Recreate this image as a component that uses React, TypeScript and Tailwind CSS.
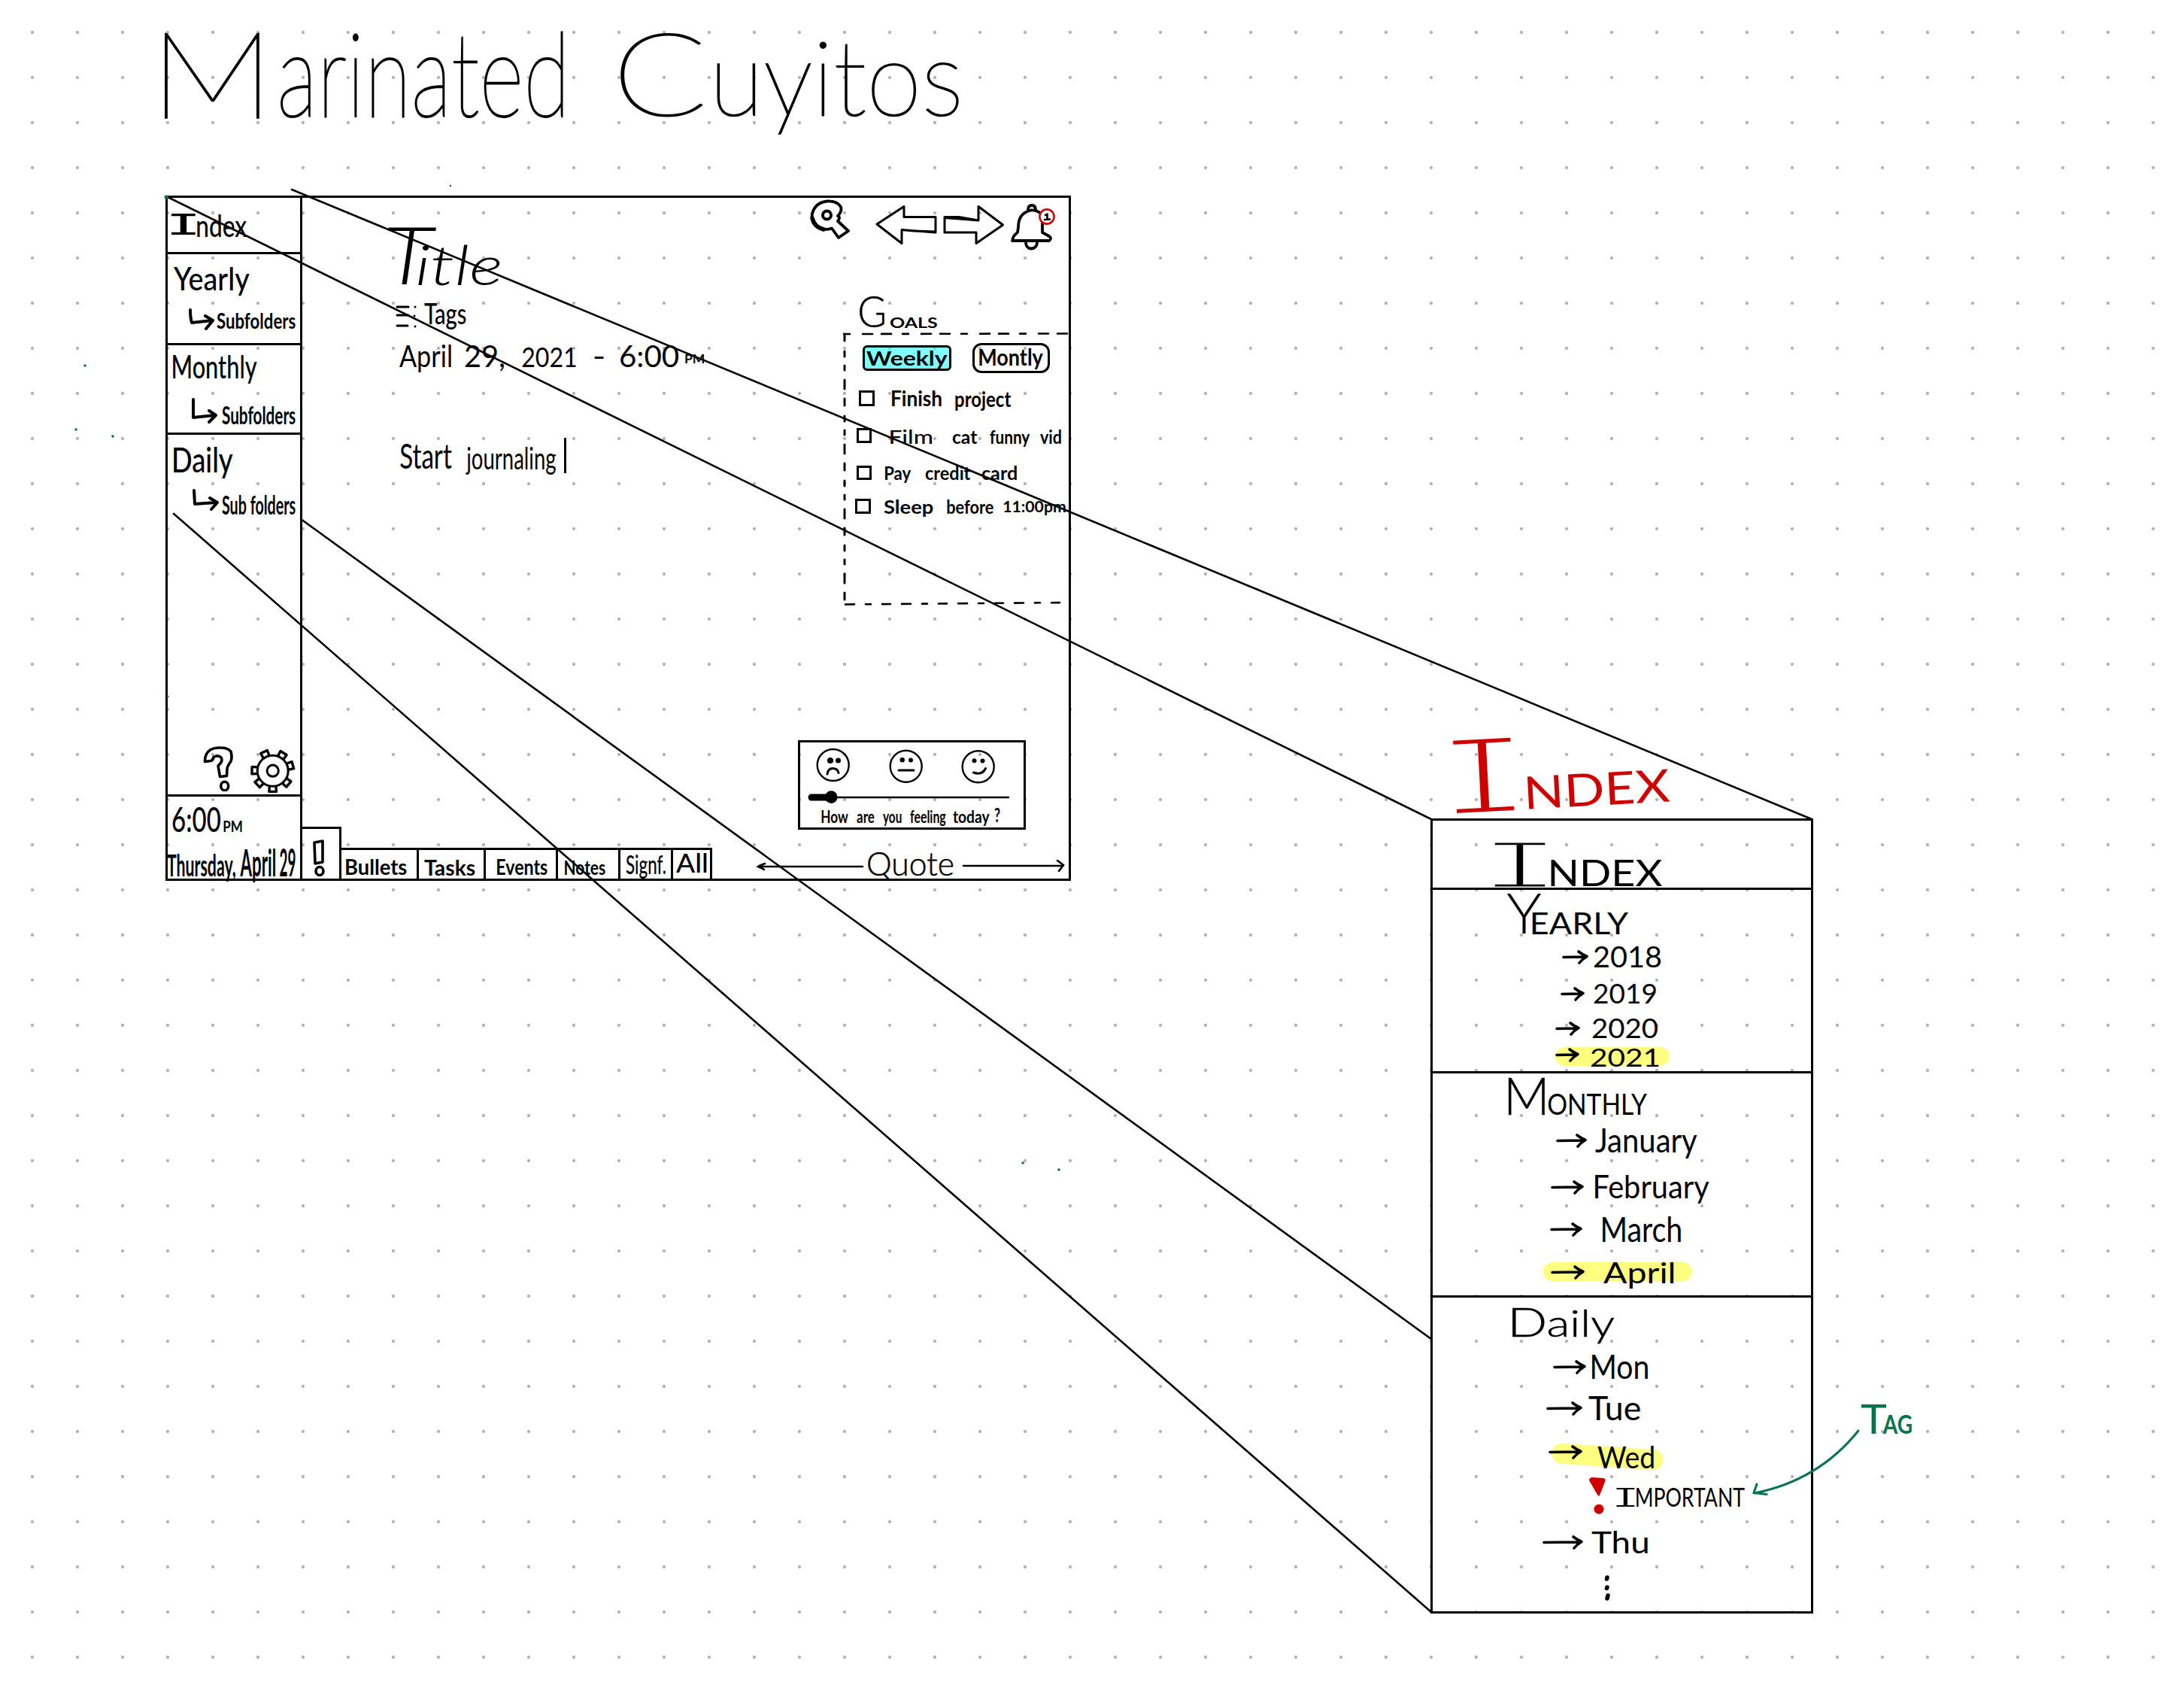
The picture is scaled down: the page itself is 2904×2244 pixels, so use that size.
import { useLayoutEffect, useRef } from "react";
import type { ReactNode } from "react";

/**
 * A word that fills its box: the ink spans the box's width, and the box's
 * height is the height of a capital, so the baseline is the bottom edge.
 */
function Ink({ children, className = "" }: { children: string; className?: string }) {
  const box = useRef<HTMLSpanElement>(null);
  const word = useRef<HTMLSpanElement>(null);
  useLayoutEffect(() => {
    const b = box.current;
    const w = word.current;
    const ctx = document.createElement("canvas").getContext("2d");
    if (!b || !w || !ctx) return;
    const cs = getComputedStyle(w);
    ctx.font = `${cs.fontStyle} ${cs.fontWeight} ${cs.fontSize} ${cs.fontFamily}`;
    const m = ctx.measureText(children);
    const cap = ctx.measureText("H").actualBoundingBoxAscent;
    const size = parseFloat(cs.fontSize);
    const up = m.fontBoundingBoxAscent;
    const down = m.fontBoundingBoxDescent;
    const base = (size - up - down) / 2 + up;
    let left = m.actualBoundingBoxLeft;
    let ink = m.actualBoundingBoxLeft + m.actualBoundingBoxRight;
    if (cs.fontFeatureSettings !== "normal") {
      const side = size * 0.045;
      left = -side;
      ink = w.offsetWidth - 2 * side;
    }
    const sx = b.clientWidth / ink;
    const sy = b.clientHeight / cap;
    w.style.transform = `matrix(${sx},0,0,${sy},${left * sx},${b.clientHeight - base * sy})`;
  }, [children]);
  return (
    <span ref={box} className={`block shrink-0 ${className}`}>
      <span ref={word} className="block w-max origin-top-left whitespace-pre leading-none">
        {children}
      </span>
    </span>
  );
}

function Arrow({ w, className = "" }: { w: number; className?: string }) {
  return (
    <svg width={w} height={22} viewBox={`0 0 ${w} 22`} className={`relative block shrink-0 overflow-visible ${className}`} fill="none" stroke="#000" strokeWidth={3.6} strokeLinecap="round" strokeLinejoin="round">
      <path d={`M2 11.5 L${w - 4} 11 M${w - 13} 4 Q${w - 8} 8 ${w - 2} 10.5 Q${w - 8} 14 ${w - 12} 19`} />
    </svg>
  );
}

function Elbow({ d, className = "" }: { d: string; className?: string }) {
  return (
    <svg width={36} height={34} viewBox="0 0 36 34" className={`block shrink-0 overflow-visible ${className}`} fill="none" stroke="#000" strokeWidth={4} strokeLinecap="round" strokeLinejoin="round">
      <path d={d} />
    </svg>
  );
}

function Goal({ className, box, children }: { className: string; box: string; children: ReactNode }) {
  return (
    <div className={`flex items-end ${className}`}>
      <span className={`block shrink-0 border-[3px] border-black ${box}`} />
      {children}
    </div>
  );
}

function Sidebar() {
  return (
    <aside className="flex w-[179px] shrink-0 flex-col border-r-[3px] border-black text-[36px] font-medium">
      <div className="flex h-[75px] shrink-0 border-b-[3px] border-black pl-[5px] pt-[21px]">
        <Ink className="h-[28px] w-[32px] font-[Inter] font-normal [font-feature-settings:'cv08']">I</Ink>
        <Ink className="ml-[2px] mt-[2px] h-[29px] w-[66px]">ndex</Ink>
      </div>
      <div className="h-[121px] shrink-0 border-b-[3px] border-black pt-[18px]">
        <Ink className="ml-[7px] h-[30px] w-[102px]">Yearly</Ink>
        <div className="mt-[24px] flex">
          <Elbow className="ml-[28px]" d="M2 2 Q2 12 4 19 L31 16 M22 10 L32 16 L23 27" />
          <Ink className="ml-[1px] mt-[5px] h-[22px] w-[105px] text-[28px] font-bold">Subfolders</Ink>
        </div>
      </div>
      <div className="h-[119px] shrink-0 border-b-[3px] border-black pt-[13px]">
        <Ink className="ml-[7px] h-[31px] w-[112px]">Monthly</Ink>
        <div className="mt-[26px] flex">
          <Elbow className="ml-[32px]" d="M2 2 L2 26 L31 23 M23 17 L32 23 L23 32" />
          <Ink className="ml-[4px] mt-[11px] h-[24px] w-[98px] text-[28px] font-bold">Subfolders</Ink>
        </div>
      </div>
      <div className="flex-1 pt-[16px]">
        <Ink className="ml-[8px] h-[34px] w-[79px]">Daily</Ink>
        <div className="mt-[22px] flex">
          <Elbow className="ml-[33px]" d="M2 2 L3 20 L31 18 M23 12 L33 18 L25 27" />
          <Ink className="ml-[3px] mt-[8px] h-[26px] w-[98px] text-[28px] font-bold">Sub folders</Ink>
        </div>
      </div>
      <div className="flex h-[73px] shrink-0 border-b-[3px] border-black pl-[44px]">
        <svg width={48} height={64} viewBox="267 988 48 64" className="mt-[2px] block" fill="none" stroke="#000" strokeWidth={3.6} strokeLinejoin="round">
          <path d="M272.500 1012.500 Q272 1002 280 996.500 Q286 993.500 293 994 Q303 994 307 999 Q309 1007 307 1012 Q302 1019 302 1022 L301.500 1031.500 L292.500 1032.500 L290 1018 Q297 1012 294 1007 Q290 1003 284 1006.500 Q283 1011 280 1011.500 Z" />
          <ellipse cx={298.700} cy={1045} rx={5} ry={5.700} />
        </svg>
        <svg width={62} height={62} viewBox="331 994 62 62" className="ml-[16px] mt-[8px] block" fill="none" stroke="#000" strokeWidth={3}>
          <circle cx={362.7} cy={1024.7} r={20.5} />
          <circle cx={362.7} cy={1024.7} r={7.6} />
          {[-25, 31, 74, 130, 180, 228, 271].map((a) => (
            <path key={a} transform={`rotate(${a} 362.7 1024.7)`} d="M358.5 1005 L358 997 L367.5 997 L367 1005" strokeWidth={3.4} strokeLinejoin="round" />
          ))}
        </svg>
      </div>
      <div className="h-[109px] shrink-0 pl-[6px] pt-[14px]">
        <div className="flex items-end">
          <Ink className="h-[33px] w-[64px]">6:00</Ink>
          <Ink className="ml-[4px] h-[15px] w-[25px] text-[20px] font-bold">PM</Ink>
        </div>
        <div className="-ml-[7px] mt-[22px] flex items-end">
          <Ink className="h-[29px] w-[91px] font-bold">Thursday,</Ink>
          <Ink className="ml-[6px] h-[36px] w-[47px] font-bold">April</Ink>
          <Ink className="ml-[6px] h-[37px] w-[21px] font-bold">29</Ink>
        </div>
      </div>
    </aside>
  );
}

function Editor() {
  return (
    <section className="flex-1 pt-[39px]">
      <div className="ml-[113px] flex items-end text-[72px] font-light italic">
        <Ink className="h-[77px] w-[66px] text-[104px]">T</Ink>
        <Ink className="-ml-[25px] h-[51px] w-[109px]">itle</Ink>
      </div>
      <div className="ml-[124px] mt-[24px] flex text-[38px]">
        <svg width={30} height={34} viewBox="0 0 30 34" className="mt-[1px] block" stroke="#000" strokeWidth={3} strokeLinecap="round">
          <path d="M2 4 L17 4 M2 15 L17 15 M2 29 L16 29 M26 4 L26 4.1 M25 16 L25 16.1 M26 30 L26 30.1" />
        </svg>
        <Ink className="ml-[8px] h-[28px] w-[56px] font-medium">Tags</Ink>
      </div>
      <div className="ml-[129px] mt-[20px] flex items-end text-[40px]">
        <Ink className="h-[30px] w-[69px]">April</Ink>
        <Ink className="ml-[18px] h-[29px] w-[52px]">29,</Ink>
        <Ink className="ml-[24px] h-[27px] w-[72px]">2021</Ink>
        <Ink className="ml-[24px] h-[29px] w-[13px]">-</Ink>
        <Ink className="ml-[22px] h-[29px] w-[77px]">6:00</Ink>
        <Ink className="mb-[4px] ml-[9px] h-[12px] w-[25px] text-[16px] font-bold">PM</Ink>
      </div>
      <div className="ml-[130px] mt-[94px] flex items-end text-[44px]">
        <Ink className="mb-[6px] h-[34px] w-[69px]">Start</Ink>
        <Ink className="mb-[5px] ml-[18px] h-[30px] w-[120px]">journaling</Ink>
        <span className="ml-[11px] block h-[47px] w-[3px] bg-black" />
      </div>
    </section>
  );
}

function Tabs() {
  return (
    <nav className="flex items-end text-[28px] font-medium">
      <div className="flex h-[69px] w-[52px] items-end justify-center border-r-[3px] border-t-[3px] border-black pb-[2px] pr-[4px]">
        <svg width={22} height={50} viewBox="413 1117 22 50" className="block" fill="none" stroke="#000" strokeWidth={3.6} strokeLinejoin="round">
          <path d="M417 1121 L428 1119 L428 1147 L418 1149 Z" />
          <ellipse cx={424} cy={1159} rx={5} ry={5.5} />
        </svg>
      </div>
      <div className="flex h-[41px] w-[103px] items-end border-r-[3px] border-t-[3px] border-black pb-[5px] pl-[6px]">
        <Ink className="h-[21px] w-[81px] font-bold">Bullets</Ink>
      </div>
      <div className="flex h-[41px] w-[89px] items-end border-r-[3px] border-t-[3px] border-black pb-[4px] pl-[7px]">
        <Ink className="h-[22px] w-[68px] font-bold">Tasks</Ink>
      </div>
      <div className="flex h-[41px] w-[96px] items-end border-r-[3px] border-t-[3px] border-black pb-[5px] pl-[15px]">
        <Ink className="h-[22px] w-[67px] font-bold">Events</Ink>
      </div>
      <div className="flex h-[41px] w-[83px] items-end border-r-[3px] border-t-[3px] border-black pb-[5px] pl-[9px]">
        <Ink className="h-[20px] w-[54px] font-bold">Notes</Ink>
      </div>
      <div className="flex h-[41px] w-[70px] items-end border-r-[3px] border-t-[3px] border-black pb-[5px] pl-[7px]">
        <Ink className="h-[26px] w-[53px] text-[32px]">Signf.</Ink>
      </div>
      <div className="flex h-[41px] w-[52px] items-end border-r-[3px] border-t-[3px] border-black pb-[7px] pl-[4px]">
        <Ink className="h-[26px] w-[41px] text-[32px]">All</Ink>
      </div>
    </nav>
  );
}

function Toolbar() {
  return (
    <div className="flex h-[70px] shrink-0 pl-[76px]">
      <svg width={54} height={54} viewBox="1076 265 54 54" className="mt-[2px] block shrink-0" fill="none" stroke="#000" strokeLinejoin="round" strokeLinecap="round">
        <path strokeWidth={3.8} d="M1114 287 Q1120 281 1118 275 Q1113 267 1100 267.500 Q1084 269 1080 284 Q1078 296 1087 302 Q1096 307 1106 303.500 L1115 316 L1128 307 L1114 294 Q1118 289 1114 287 Z" />
        <path strokeWidth={5.5} d="M1080 290 Q1083 302 1095 305" />
        <circle cx={1099.5} cy={286} r={5.5} strokeWidth={4} />
      </svg>
      <svg width={84} height={54} viewBox="1164 272 84 54" className="ml-[34px] mt-[9px] block shrink-0" fill="none" stroke="#000" strokeWidth={3} strokeLinejoin="round">
        <path d="M1166 298 L1202 274.5 L1202 288.5 L1244 288.5 L1244 309 L1199 305.5 L1199 323.5 Z M1199 305.5 L1215 307 L1244 308" />
      </svg>
      <svg width={84} height={54} viewBox="1253 272 84 54" className="ml-[5px] mt-[9px] block shrink-0" fill="none" stroke="#000" strokeWidth={3} strokeLinejoin="round">
        <path d="M1256 288.5 L1275 288.5 L1301 293 L1301 274.5 L1333.5 299 L1298 323.5 L1298 309 L1256 309 Z M1256 289.5 L1301 293" />
      </svg>
      <svg width={66} height={68} viewBox="1340 266 66 68" className="ml-[3px] mt-[3px] block shrink-0" fill="none" stroke="#000" strokeWidth={3.8} strokeLinejoin="round" strokeLinecap="round">
        <path d="M1384 284 Q1378 279 1371 279.5 Q1354 283 1354 302 L1353 309 Q1347 313 1346 320 L1395 320 Q1399 317 1395 314 L1386 309 L1386 297" />
        <path d="M1367 279 Q1367 273 1372 273 Q1377 273 1377 279" />
        <path d="M1364 322 Q1364 330 1371 330.500 Q1379 330 1379 322" />
        <circle cx={1392} cy={288} r={9.6} stroke="#c80a0a" strokeWidth={2.6} fill="#fff" />
        <path d="M1390 286 L1392.500 284.500 L1392.500 291.500 M1389 292 L1396 291.500" strokeWidth={2.6} />
      </svg>
    </div>
  );
}

function Goals() {
  return (
    <section className="shrink-0">
      <div className="ml-[143px] mt-[63px] flex items-end">
        <Ink className="h-[40px] w-[33px] text-[56px] font-light [-webkit-text-stroke:0.5px]">G</Ink>
        <Ink className="ml-[7px] h-[14px] w-[64px] text-[18px] font-bold">OALS</Ink>
      </div>
      <div className="ml-[122px] mt-[6px] h-[362px] pt-[14px]">
        <div className="flex items-center">
          <div className="ml-[25px] flex h-[34px] w-[118px] justify-center rounded-[6px] border-[3px] border-black bg-[#00ffff]/50 pt-[5px]">
            <Ink className="h-[19px] w-[108px] text-[26px] font-bold">Weekly</Ink>
          </div>
          <div className="ml-[28px] flex h-[40px] w-[103px] justify-center rounded-[12px] border-[3px] border-black pt-[4px]">
            <Ink className="h-[23px] w-[85px] text-[30px] font-bold">Montly</Ink>
          </div>
        </div>
        <div className="text-[25px] font-bold">
          <Goal className="ml-[20px] mt-[23px]" box="h-[21px] w-[21px]">
            <Ink className="-mb-[1px] ml-[23px] h-[20px] w-[66px]">Finish</Ink>
            <Ink className="-mb-[2px] ml-[18px] h-[20px] w-[75px]">project</Ink>
          </Goal>
          <Goal className="ml-[17px] mt-[29px]" box="h-[20px] w-[20px]">
            <Ink className="-mb-[1px] ml-[25px] h-[18px] w-[56px] font-medium">Film</Ink>
            <Ink className="-mb-[1px] ml-[26px] h-[18px] w-[34px]">cat</Ink>
            <Ink className="-mb-[1px] ml-[16px] h-[18px] w-[54px]">funny</Ink>
            <Ink className="-mb-[1px] ml-[13px] h-[18px] w-[28px]">vid</Ink>
          </Goal>
          <Goal className="ml-[17px] mt-[30px]" box="h-[19px] w-[20px]">
            <Ink className="ml-[18px] h-[18px] w-[35px]">Pay</Ink>
            <Ink className="ml-[18px] h-[18px] w-[61px]">credit</Ink>
            <Ink className="ml-[14px] h-[18px] w-[47px]">card</Ink>
          </Goal>
          <Goal className="ml-[15px] mt-[25px]" box="h-[20px] w-[21px]">
            <Ink className="ml-[17px] h-[18px] w-[66px]">Sleep</Ink>
            <Ink className="ml-[18px] h-[18px] w-[62px]">before</Ink>
            <Ink className="mb-[2px] ml-[13px] h-[15px] w-[83px]">11:00pm</Ink>
          </Goal>
        </div>
      </div>
    </section>
  );
}

function Mood() {
  return (
    <section className="ml-[61px] mt-[180px] h-[119px] w-[303px] shrink-0 border-[3px] border-black">
      <svg width={297} height={84} viewBox="1064 986 297 84" className="block" fill="none" stroke="#000" strokeWidth={2.4} strokeLinecap="round">
        <circle cx={1107.7} cy={1016} r={21} />
        <circle cx={1204.7} cy={1017.700} r={21} />
        <circle cx={1300.700} cy={1018.300} r={21} />
        <g fill="#000" stroke="none">
          <circle cx={1104} cy={1010} r={4} />
          <circle cx={1114.500} cy={1010} r={3.500} />
          <circle cx={1199.700} cy={1009.300} r={3.200} />
          <circle cx={1211} cy={1009.500} r={3} />
          <circle cx={1295.500} cy={1010.300} r={3} />
          <circle cx={1306.500} cy={1010.500} r={3} />
        </g>
        <path d="M1100 1028 Q1101 1020 1108 1020.500 Q1114 1021 1115 1026.500 M1195 1023 L1215 1023 M1294.500 1026 Q1306 1030 1310.500 1020.500" strokeWidth={3} />
        <path d="M1110 1059 L1341 1059" />
        <path d="M1079 1059 L1100 1059" strokeWidth={9} />
        <circle cx={1105.300} cy={1058.600} r={8.300} fill="#000" stroke="none" />
      </svg>
      <div className="ml-[28px] mt-[3px] flex items-end text-[22px] font-bold">
        <Ink className="h-[17px] w-[36px]">How</Ink>
        <Ink className="ml-[11px] h-[17px] w-[24px]">are</Ink>
        <Ink className="ml-[11px] h-[17px] w-[25px]">you</Ink>
        <Ink className="ml-[11px] h-[17px] w-[48px]">feeling</Ink>
        <Ink className="ml-[9px] h-[17px] w-[49px]">today</Ink>
        <Ink className="ml-[6px] h-[20px] w-[8px]">?</Ink>
      </div>
    </section>
  );
}

function Quote() {
  return (
    <div className="ml-[5px] mt-[31px] flex shrink-0">
      <svg width={145} height={20} viewBox="1005 1142 145 20" className="mt-[8px] block shrink-0" fill="none" stroke="#000" strokeWidth={2.6} strokeLinecap="round">
        <path d="M1008 1152 L1147 1152 M1017 1148 Q1011 1150 1008 1152 Q1013 1154 1016 1156" />
      </svg>
      <Ink className="ml-[4px] h-[30px] w-[113px] text-[42px] font-light [-webkit-text-stroke:0.5px]">Quote</Ink>
      <svg width={140} height={20} viewBox="1279 1141 140 20" className="ml-[12px] mt-[7px] block shrink-0" fill="none" stroke="#000" strokeWidth={2.6} strokeLinecap="round">
        <path d="M1281 1151 L1412 1151 M1406 1144 L1414 1150 L1408 1158" />
      </svg>
    </div>
  );
}

function IndexPanel() {
  return (
    <div className="h-[1057px] w-[509px] border-[3px] border-black">
      <div className="flex h-[92px] items-end border-b-[3px] border-black pb-[2px] pl-[81px]">
        <Ink className="h-[57px] w-[70px] font-[Inter] text-[80px] font-thin [-webkit-text-stroke:1px] [font-feature-settings:'cv08']">I</Ink>
        <Ink className="ml-[6px] h-[35px] w-[148px] text-[50px]">NDEX</Ink>
      </div>
      <div className="h-[244px] border-b-[3px] border-black pt-[5px] text-[38px]">
        <div className="ml-[98px] flex items-end">
          <Ink className="h-[54px] w-[47px] text-[74px] font-light">Y</Ink>
          <Ink className="-ml-[13px] h-[30px] w-[129px] text-[42px]">EARLY</Ink>
        </div>
        <div className="ml-[172px] mt-[15px] flex items-center">
          <Arrow w={35} />
          <Ink className="ml-[7px] h-[29px] w-[90px]">2018</Ink>
        </div>
        <div className="ml-[170px] mt-[21px] flex items-center">
          <Arrow w={32} />
          <Ink className="ml-[12px] h-[27px] w-[83px]">2019</Ink>
        </div>
        <div className="ml-[163px] mt-[19px] flex items-center">
          <Arrow w={33} />
          <Ink className="ml-[16px] h-[27px] w-[87px]">2020</Ink>
        </div>
        <div className="ml-[163px] mt-[12px] flex h-[25px] w-[152px] rounded-full bg-[#ffff00]/50">
          <Arrow w={32} className="-mt-[1px]" />
          <Ink className="ml-[15px] mt-[2px] h-[24px] w-[91px]">2021</Ink>
        </div>
      </div>
      <div className="h-[298px] border-b-[3px] border-black pt-[6px] text-[44px]">
        <div className="ml-[101px] flex items-end">
          <Ink className="h-[49px] w-[48px] text-[68px] font-light [-webkit-text-stroke:0.5px]">M</Ink>
          <Ink className="ml-[4px] h-[28px] w-[132px] text-[40px]">ONTHLY</Ink>
        </div>
        <div className="ml-[164px] mt-[17px] flex items-center">
          <Arrow w={41} />
          <Ink className="ml-[11px] h-[33px] w-[136px]">January</Ink>
        </div>
        <div className="ml-[157px] mt-[30px] flex items-center">
          <Arrow w={44} />
          <Ink className="ml-[15px] h-[31px] w-[152px]">February</Ink>
        </div>
        <div className="ml-[156px] mt-[24px] flex items-center">
          <Arrow w={43} />
          <Ink className="ml-[27px] h-[34px] w-[104px]">March</Ink>
        </div>
        <div className="ml-[147px] mt-[27px] flex h-[25px] w-[198px] rounded-full bg-[#ffff00]/50 pl-[10px]">
          <Arrow w={45} className="mt-[2px]" />
          <Ink className="ml-[25px] h-[28px] w-[94px]">April</Ink>
        </div>
      </div>
      <div className="pt-[15px] text-[44px]">
        <div className="ml-[106px] flex items-end">
          <Ink className="h-[37px] w-[43px] text-[52px] font-light [-webkit-text-stroke:0.5px]">D</Ink>
          <Ink className="ml-[4px] h-[34px] w-[89px] font-light [-webkit-text-stroke:0.5px]">aily</Ink>
        </div>
        <div className="ml-[160px] mt-[23px] flex items-center">
          <Arrow w={44} />
          <Ink className="ml-[8px] h-[33px] w-[74px]">Mon</Ink>
        </div>
        <div className="ml-[151px] mt-[22px] flex items-center">
          <Arrow w={48} />
          <Ink className="ml-[8px] h-[33px] w-[69px]">Tue</Ink>
        </div>
        <div className="relative mt-[34px] flex pl-[154px]">
          <span className="absolute left-[159px] top-[1px] block h-[27px] w-[147px] rotate-[4deg] rounded-[12px] bg-[#ffff00]/50" />
          <Arrow w={45} className="-mt-[3px]" />
          <Ink className="ml-[20px] h-[30px] w-[75px]">Wed</Ink>
        </div>
        <div className="ml-[206px] mt-[11px] flex">
          <svg width={30} height={50} viewBox="2111 1963 30 50" className="block shrink-0" fill="#cf0000">
            <path d="M2113 1968 Q2113 1964 2118 1964 L2132 1965 Q2136 1966 2134 1970 L2127 1988 Q2125 1990 2124 1987 Z" />
            <circle cx={2126} cy={2006.200} r={6.500} />
          </svg>
          <div className="ml-[8px] mt-[15px] flex text-[34px]">
            <Ink className="h-[25px] w-[24px] font-[Inter] font-light [font-feature-settings:'cv08']">I</Ink>
            <Ink className="ml-[3px] h-[25px] w-[144px]">MPORTANT</Ink>
          </div>
        </div>
        <div className="ml-[146px] mt-[22px] flex items-center">
          <Arrow w={54} />
          <Ink className="ml-[11px] h-[30px] w-[75px]">Thu</Ink>
        </div>
        <svg width={10} height={40} viewBox="2132 2092 10 40" className="ml-[227px] mt-[27px] block" stroke="#000" strokeWidth={5.500} strokeLinecap="round">
          <path d="M2137 2097 L2136.500 2099 M2137 2110 L2136.500 2111.500 M2138 2121 L2137 2125" />
        </svg>
      </div>
    </div>
  );
}

function Overlay() {
  return (
    <svg width={2904} height={2244} viewBox="0 0 2904 2244" className="pointer-events-none absolute left-0 top-0 block" fill="none" stroke="#000" strokeWidth={2.6} strokeLinecap="round">
      <path d="M221 261 L1903 1089 M388 252 L2409 1089 M231 683 L1903 2143 M400 690 L1903 1780" />
      <path d="M1122 444 L1420 443.500" strokeDasharray="8 17 13 12 13 15" />
      <path d="M1123 444 L1123 803" strokeDasharray="9 14 7 12 6 13 12 13" strokeWidth={3} />
      <path d="M1124 803.500 L1420 801" strokeDasharray="12 15 7 15 11 15" />
      <g stroke="#04744f" strokeWidth={3}>
        <path d="M2471 1902 Q2418 1968 2333 1985 M2336 1973 L2332 1984.500 L2349 1986.500" />
      </g>
      <g fill="#04744f" stroke="none">
        <circle cx={113} cy={486} r={1.800} />
        <circle cx={101} cy={571} r={1.800} />
        <circle cx={150} cy={580} r={1.800} />
        <circle cx={221} cy={262} r={2.500} />
        <circle cx={223} cy={926} r={1.500} />
        <circle cx={1360} cy={1546} r={1.800} />
        <circle cx={1408} cy={1555} r={1.800} />
        <circle cx={599} cy={247} r={1.200} fill="#cf0000" />
      </g>
    </svg>
  );
}

export default function App() {
  return (
    <div className="relative h-[2244px] w-[2904px] overflow-hidden bg-white bg-[radial-gradient(circle,#b4b4b4_1.600px,transparent_2.600px)] bg-[length:60px_60px] bg-[position:13px_13px] font-[Lato] text-black">
      <header className="flex h-[260px] pl-[220px] pt-[45px] text-[156px] font-thin [-webkit-text-stroke:2.2px]">
        <Ink className="h-[113px] w-[124px] [-webkit-text-stroke:1.6px]">M</Ink>
        <Ink className="ml-[29px] h-[110px] w-[375px]">arinated</Ink>
        <Ink className="ml-[78px] h-[108px] w-[107px]">C</Ink>
        <Ink className="ml-[21px] mt-[11px] h-[97px] w-[320px]">uyitos</Ink>
      </header>
      <main className="flex items-start pl-[220px]">
        <div className="flex h-[911px] w-[1204px] shrink-0 border-[3px] border-black">
          <Sidebar />
          <div className="flex w-[598px] shrink-0 flex-col">
            <Editor />
            <Tabs />
          </div>
          <div className="flex w-[421px] shrink-0 flex-col">
            <Toolbar />
            <Goals />
            <Mood />
            <Quote />
          </div>
        </div>
        <div className="ml-[478px] mt-[715px] w-[509px] shrink-0">
          <div className="ml-[31px] flex h-[98px] w-[286px] -rotate-[3deg] items-end text-[#cf0000]">
            <Ink className="h-[94px] w-[79px] font-[Inter] text-[128px] font-thin [-webkit-text-stroke:2.2px] [font-feature-settings:'cv08']">I</Ink>
            <Ink className="ml-[18px] h-[43px] w-[189px] text-[60px]">NDEX</Ink>
          </div>
          <div className="mt-[15px]">
            <IndexPanel />
          </div>
        </div>
        <div className="ml-[63px] mt-[1607px] flex items-end font-bold text-[#04744f]">
          <Ink className="h-[39px] w-[35px] text-[54px] font-normal">T</Ink>
          <Ink className="-ml-[6px] h-[25px] w-[39px] text-[35px]">AG</Ink>
        </div>
      </main>
      <Overlay />
    </div>
  );
}
